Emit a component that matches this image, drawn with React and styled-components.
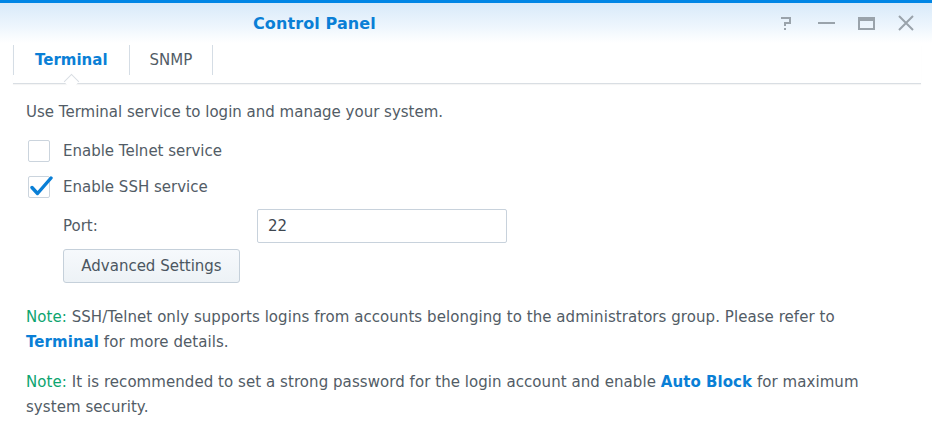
import styled, { createGlobalStyle } from "styled-components";

const GlobalStyle = createGlobalStyle`
  html, body {
    margin: 0;
    padding: 0;
    background: #fff;
  }
  body {
    font-family: "DejaVu Sans", Verdana, sans-serif;
    font-size: 15px;
    color: #525c66;
  }
`;

const Window = styled.div`
  width: 932px;
  height: 432px;
  background: #fff;
  overflow: hidden;
  display: flex;
  flex-direction: column;
`;

const TitleBar = styled.div`
  height: 40px;
  border-top: 3px solid #0086e5;
  background: linear-gradient(to bottom, #d8eaf9 0%, #eef6fd 60%, #ffffff 100%);
  display: flex;
  align-items: center;
  padding: 0 6px 0 253px;
`;

const Title = styled.div`
  font-size: 16px;
  font-weight: bold;
  color: #0a7fd6;
  letter-spacing: 0.1px;
`;

const Controls = styled.div`
  margin-left: auto;
  display: flex;
  align-items: center;
`;

const ControlButton = styled.div`
  width: 40px;
  height: 24px;
  display: flex;
  align-items: center;
  justify-content: center;
  color: #9aa3ab;
`;

const TabBar = styled.div`
  margin: 2px 11px 0 13px;
  height: 38px;
  display: flex;
  border-bottom: 1px solid #d9dee3;
  box-shadow: 0 1px 1px rgba(0, 0, 0, 0.04);
`;

const Tab = styled.div`
  position: relative;
  height: 30px;
  padding: 0 ${(p) => p.$pad}px;
  display: flex;
  align-items: center;
  border-left: 1px solid #d5dde5;
  border-right: ${(p) => (p.$last ? "1px solid #d5dde5" : "none")};
  font-size: 15px;
  font-weight: ${(p) => (p.$active ? "bold" : "normal")};
  color: ${(p) => (p.$active ? "#0a7fd6" : "#525c66")};

  ${(p) =>
    p.$active &&
    `
    &::after {
      content: "";
      position: absolute;
      left: 50%;
      bottom: -12px;
      width: 10px;
      height: 10px;
      margin-left: -5px;
      background: #fff;
      border-left: 1px solid #d9dee3;
      border-top: 1px solid #d9dee3;
      transform: rotate(45deg);
    }
  `}
`;

const Content = styled.div`
  padding: 18px 32px 0 26px;
  display: flex;
  flex-direction: column;
`;

const Description = styled.div`
  line-height: 20px;
`;

const CheckRow = styled.label`
  display: flex;
  align-items: center;
  gap: 13px;
  margin-left: 2px;
  margin-top: ${(p) => p.$top}px;
  line-height: 22px;
`;

const Box = styled.span`
  width: 20px;
  height: 20px;
  border: 1px solid #cbd4dd;
  border-radius: 2px;
  background: #fff;
  position: relative;
  flex: none;

  svg {
    position: absolute;
    left: 1px;
    top: -2px;
  }
`;

const FieldRow = styled.div`
  display: grid;
  grid-template-columns: 194px 250px;
  align-items: center;
  margin: 11px 0 0 37px;
`;

const Input = styled.div`
  height: 32px;
  border: 1px solid #c8d2dc;
  border-radius: 2px;
  display: flex;
  align-items: center;
  padding: 0 10px;
  color: #3e4750;
`;

const Button = styled.div`
  align-self: flex-start;
  margin: 6px 0 0 37px;
  width: 175px;
  height: 32px;
  border: 1px solid #c5d0da;
  border-radius: 3px;
  background: linear-gradient(to bottom, #f6f9fc, #edf2f6);
  display: flex;
  align-items: center;
  justify-content: center;
  color: #4b5661;
`;

const Note = styled.p`
  margin: ${(p) => p.$top}px 0 0 0;
  line-height: 25px;
  letter-spacing: 0.06px;
`;

const NoteLabel = styled.span`
  color: #0ea56f;
`;

const Link = styled.span`
  color: #0a7fd6;
  font-weight: bold;
`;

const HelpIcon = () => (
  <svg width="12" height="14" viewBox="0 0 12 14" fill="none" stroke="currentColor" strokeWidth="2">
    <path d="M1 2h9v5H5v3" />
    <rect x="4" y="12" width="2" height="2" fill="currentColor" stroke="none" />
  </svg>
);

const MinIcon = () => (
  <svg width="17" height="4" viewBox="0 0 17 4">
    <rect x="0" y="1" width="17" height="2" fill="currentColor" />
  </svg>
);

const MaxIcon = () => (
  <svg width="17" height="13" viewBox="0 0 17 13" fill="none" stroke="currentColor">
    <rect x="1" y="1" width="15" height="11" strokeWidth="2" />
    <rect x="1" y="1" width="15" height="3" fill="currentColor" stroke="none" />
  </svg>
);

const CloseIcon = () => (
  <svg width="16" height="16" viewBox="0 0 16 16" stroke="currentColor" strokeWidth="2">
    <path d="M1 1l14 14M15 1L1 15" />
  </svg>
);

const Check = () => (
  <svg width="24" height="22" viewBox="0 0 24 22" fill="none">
    <path d="M2 12.5l5.5 6L21 3" stroke="#0a7fd6" strokeWidth="3.4" strokeLinecap="round" strokeLinejoin="round" />
  </svg>
);

const App = () => {
  return (
    <Window>
      <GlobalStyle />
      <TitleBar>
        <Title>Control Panel</Title>
        <Controls>
          <ControlButton>
            <HelpIcon />
          </ControlButton>
          <ControlButton>
            <MinIcon />
          </ControlButton>
          <ControlButton>
            <MaxIcon />
          </ControlButton>
          <ControlButton>
            <CloseIcon />
          </ControlButton>
        </Controls>
      </TitleBar>

      <TabBar>
        <Tab $active $pad={21}>
          Terminal
        </Tab>
        <Tab $last $pad={20}>
          SNMP
        </Tab>
      </TabBar>

      <Content>
        <Description>Use Terminal service to login and manage your system.</Description>

        <CheckRow $top={18}>
          <Box />
          Enable Telnet service
        </CheckRow>
        <CheckRow $top={14}>
          <Box>
            <Check />
          </Box>
          Enable SSH service
        </CheckRow>

        <FieldRow>
          <span>Port:</span>
          <Input>22</Input>
        </FieldRow>
        <Button>Advanced Settings</Button>

        <Note $top={22}>
          <NoteLabel>Note:</NoteLabel> SSH/Telnet only supports logins from accounts belonging to the
          administrators group. Please refer to <Link>Terminal</Link> for more details.
        </Note>
        <Note $top={15}>
          <NoteLabel>Note:</NoteLabel> It is recommended to set a strong password for the login account
          and enable <Link>Auto Block</Link> for maximum system security.
        </Note>
      </Content>
    </Window>
  );
};

export default App;
